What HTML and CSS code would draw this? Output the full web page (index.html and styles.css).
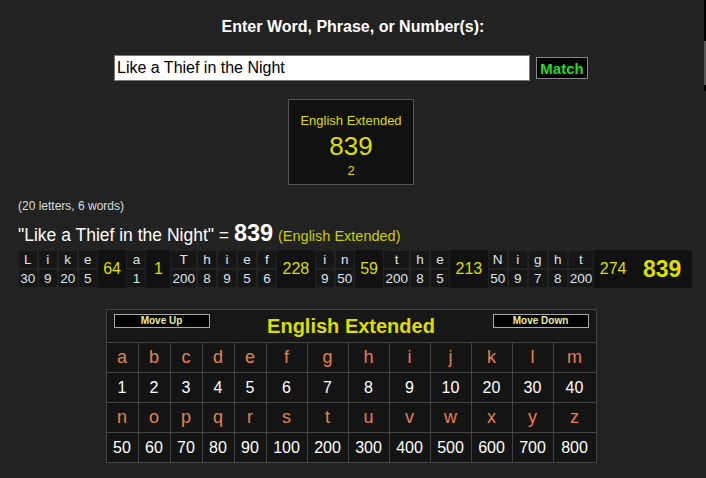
FILE: index.html
```
<!DOCTYPE html>
<html lang="en">
<head>
    <meta charset="UTF-8">
    <title>Gematria</title>
    <link rel="stylesheet" href="styles.css">
</head>
<body>
<div class="edge"><div class="edge-knob"></div></div>
<div class="title">Enter Word, Phrase, or Number(s):</div>
<div class="search">
    <input class="phrase" type="text" value="Like a Thief in the Night">
    <input class="match" type="button" value="Match">
</div>
<div class="result-wrap">
    <div class="result">
        <div class="result-name">English Extended</div>
        <div class="result-num">839</div>
        <div class="result-sub">2</div>
    </div>
</div>
<div class="counts">(20 letters, 6 words)</div>
<div class="sentence">"Like a Thief in the Night" = <b class="sentence-num">839</b> <span class="sentence-ciph">(English Extended)</span></div>
<div class="bd-wrap">
    <div class="breakdown">
        <div class="bd-ch"><span>L</span><span>30</span></div>
        <div class="bd-ch"><span>i</span><span>9</span></div>
        <div class="bd-ch"><span>k</span><span>20</span></div>
        <div class="bd-ch"><span>e</span><span>5</span></div>
        <div class="bd-sum">64</div>
        <div class="bd-ch"><span>a</span><span>1</span></div>
        <div class="bd-sum">1</div>
        <div class="bd-ch"><span>T</span><span>200</span></div>
        <div class="bd-ch"><span>h</span><span>8</span></div>
        <div class="bd-ch"><span>i</span><span>9</span></div>
        <div class="bd-ch"><span>e</span><span>5</span></div>
        <div class="bd-ch"><span>f</span><span>6</span></div>
        <div class="bd-sum">228</div>
        <div class="bd-ch"><span>i</span><span>9</span></div>
        <div class="bd-ch"><span>n</span><span>50</span></div>
        <div class="bd-sum">59</div>
        <div class="bd-ch"><span>t</span><span>200</span></div>
        <div class="bd-ch"><span>h</span><span>8</span></div>
        <div class="bd-ch"><span>e</span><span>5</span></div>
        <div class="bd-sum">213</div>
        <div class="bd-ch"><span>N</span><span>50</span></div>
        <div class="bd-ch"><span>i</span><span>9</span></div>
        <div class="bd-ch"><span>g</span><span>7</span></div>
        <div class="bd-ch"><span>h</span><span>8</span></div>
        <div class="bd-ch"><span>t</span><span>200</span></div>
        <div class="bd-sum">274</div>
        <div class="bd-total">839</div>
    </div>
</div>
<div class="chart-wrap">
    <div class="chart">
        <div class="chart-head">
            <div class="move">Move Up</div>
            <div class="chart-title">English Extended</div>
            <div class="move">Move Down</div>
        </div>
        <div class="ltr">a</div><div class="ltr">b</div><div class="ltr">c</div><div class="ltr">d</div><div class="ltr">e</div><div class="ltr">f</div><div class="ltr">g</div><div class="ltr">h</div><div class="ltr">i</div><div class="ltr">j</div><div class="ltr">k</div><div class="ltr">l</div><div class="ltr">m</div>
        <div class="val">1</div><div class="val">2</div><div class="val">3</div><div class="val">4</div><div class="val">5</div><div class="val">6</div><div class="val">7</div><div class="val">8</div><div class="val">9</div><div class="val">10</div><div class="val">20</div><div class="val">30</div><div class="val">40</div>
        <div class="ltr">n</div><div class="ltr">o</div><div class="ltr">p</div><div class="ltr">q</div><div class="ltr">r</div><div class="ltr">s</div><div class="ltr">t</div><div class="ltr">u</div><div class="ltr">v</div><div class="ltr">w</div><div class="ltr">x</div><div class="ltr">y</div><div class="ltr">z</div>
        <div class="val">50</div><div class="val">60</div><div class="val">70</div><div class="val">80</div><div class="val">90</div><div class="val">100</div><div class="val">200</div><div class="val">300</div><div class="val">400</div><div class="val">500</div><div class="val">600</div><div class="val">700</div><div class="val">800</div>
    </div>
</div>
</body>
</html>
```

FILE: styles.css
```
*{
    margin: 0;
    padding: 0;
    box-sizing: border-box;
}
body{
    background: #222222;
    color: #dddddd;
    font-family: "Liberation Sans", Arial, sans-serif;
    overflow: hidden;
}
.edge{
    position: fixed;
    right: 0;
    top: 0;
    width: 2px;
    height: 91px;
    background: #000000;
}
.edge-knob{
    margin-top: 41px;
    height: 44px;
    background: #555555;
}
.title{
    margin-top: 17px;
    height: 20px;
    line-height: 20px;
    text-align: center;
    font-size: 16px;
    font-weight: bold;
    color: #ffffff;
}
.search{
    margin-top: 18px;
    display: flex;
    justify-content: center;
    align-items: center;
    gap: 6px;
    padding-right: 4px;
}
.phrase{
    width: 416px;
    height: 26px;
    border: 1px solid #767676;
    padding: 0 2px;
    font-family: "Liberation Sans", Arial, sans-serif;
    font-size: 16px;
    color: #000000;
    background: #ffffff;
}
.match{
    width: 52px;
    height: 22px;
    background: #000000;
    border: 1px solid #888888;
    color: #22dd22;
    font-family: "Liberation Sans", Arial, sans-serif;
    font-size: 15px;
    font-weight: bold;
}
.result-wrap{
    margin-top: 18px;
    display: flex;
    justify-content: center;
    padding-right: 4px;
}
.result{
    width: 126px;
    height: 86px;
    background: #111111;
    border: 1px solid #555555;
    text-align: center;
    color: #dddd00;
    padding-top: 13px;
}
.result-name{
    font-size: 13px;
    line-height: 15px;
}
.result-num{
    font-size: 26px;
    line-height: 30px;
    margin-top: 3px;
}
.result-sub{
    font-size: 13px;
    line-height: 15px;
    margin-top: 2px;
}
.counts{
    margin-top: 14px;
    padding-left: 18px;
    font-size: 12px;
    line-height: 14px;
    color: #dddddd;
}
.sentence{
    margin-top: 9px;
    padding-left: 18px;
    font-size: 17.5px;
    line-height: 22px;
    color: #ffffff;
}
.sentence-num{
    font-size: 23.5px;
}
.sentence-ciph{
    font-size: 14.5px;
    color: #cccc00;
}
.bd-wrap{
    margin-top: 3px;
    display: flex;
    justify-content: center;
    padding-left: 4px;
}
.breakdown{
    display: flex;
    background: #111111;
    height: 38px;
}
.bd-ch{
    display: flex;
    flex-direction: column;
}
.bd-ch span{
    height: 19px;
    min-width: 20px;
    padding: 0 1px;
    line-height: 18px;
    text-align: center;
    font-size: 13.5px;
    color: #dde4ee;
    background: #161616;
    border: 1px solid #222222;
}
.bd-sum{
    min-width: 24px;
    padding: 0 5.5px;
    line-height: 38px;
    text-align: center;
    font-size: 16px;
    color: #dddd00;
}
.bd-total{
    padding: 0 11px;
    line-height: 38px;
    font-size: 23px;
    font-weight: bold;
    color: #dddd00;
}
.chart-wrap{
    margin-top: 21px;
    display: flex;
    justify-content: center;
    padding-right: 4px;
}
.chart{
    display: grid;
    grid-template-columns: repeat(5, 31px) repeat(7, 40px) 42px;
    grid-template-rows: 32px repeat(4, 29px);
    gap: 1px;
    padding: 1px;
    background: #444444;
}
.chart-head{
    grid-column: 1 / -1;
    background: #171717;
    display: flex;
    justify-content: space-between;
    align-items: flex-start;
    padding: 4px 7px 0 7px;
}
.move{
    width: 96px;
    height: 14px;
    background: #000000;
    border: 1px solid #aaaaaa;
    text-align: center;
    font-size: 10px;
    line-height: 12px;
    font-weight: bold;
    color: #eeee99;
}
.chart-title{
    margin-top: 0;
    font-size: 20px;
    line-height: 24px;
    font-weight: bold;
    color: #dddd00;
}
.ltr, .val{
    background: #141414;
    text-align: center;
    line-height: 29px;
}
.ltr{
    font-size: 18px;
    color: #e8804a;
}
.val{
    font-size: 16px;
    color: #ffffff;
}
```
